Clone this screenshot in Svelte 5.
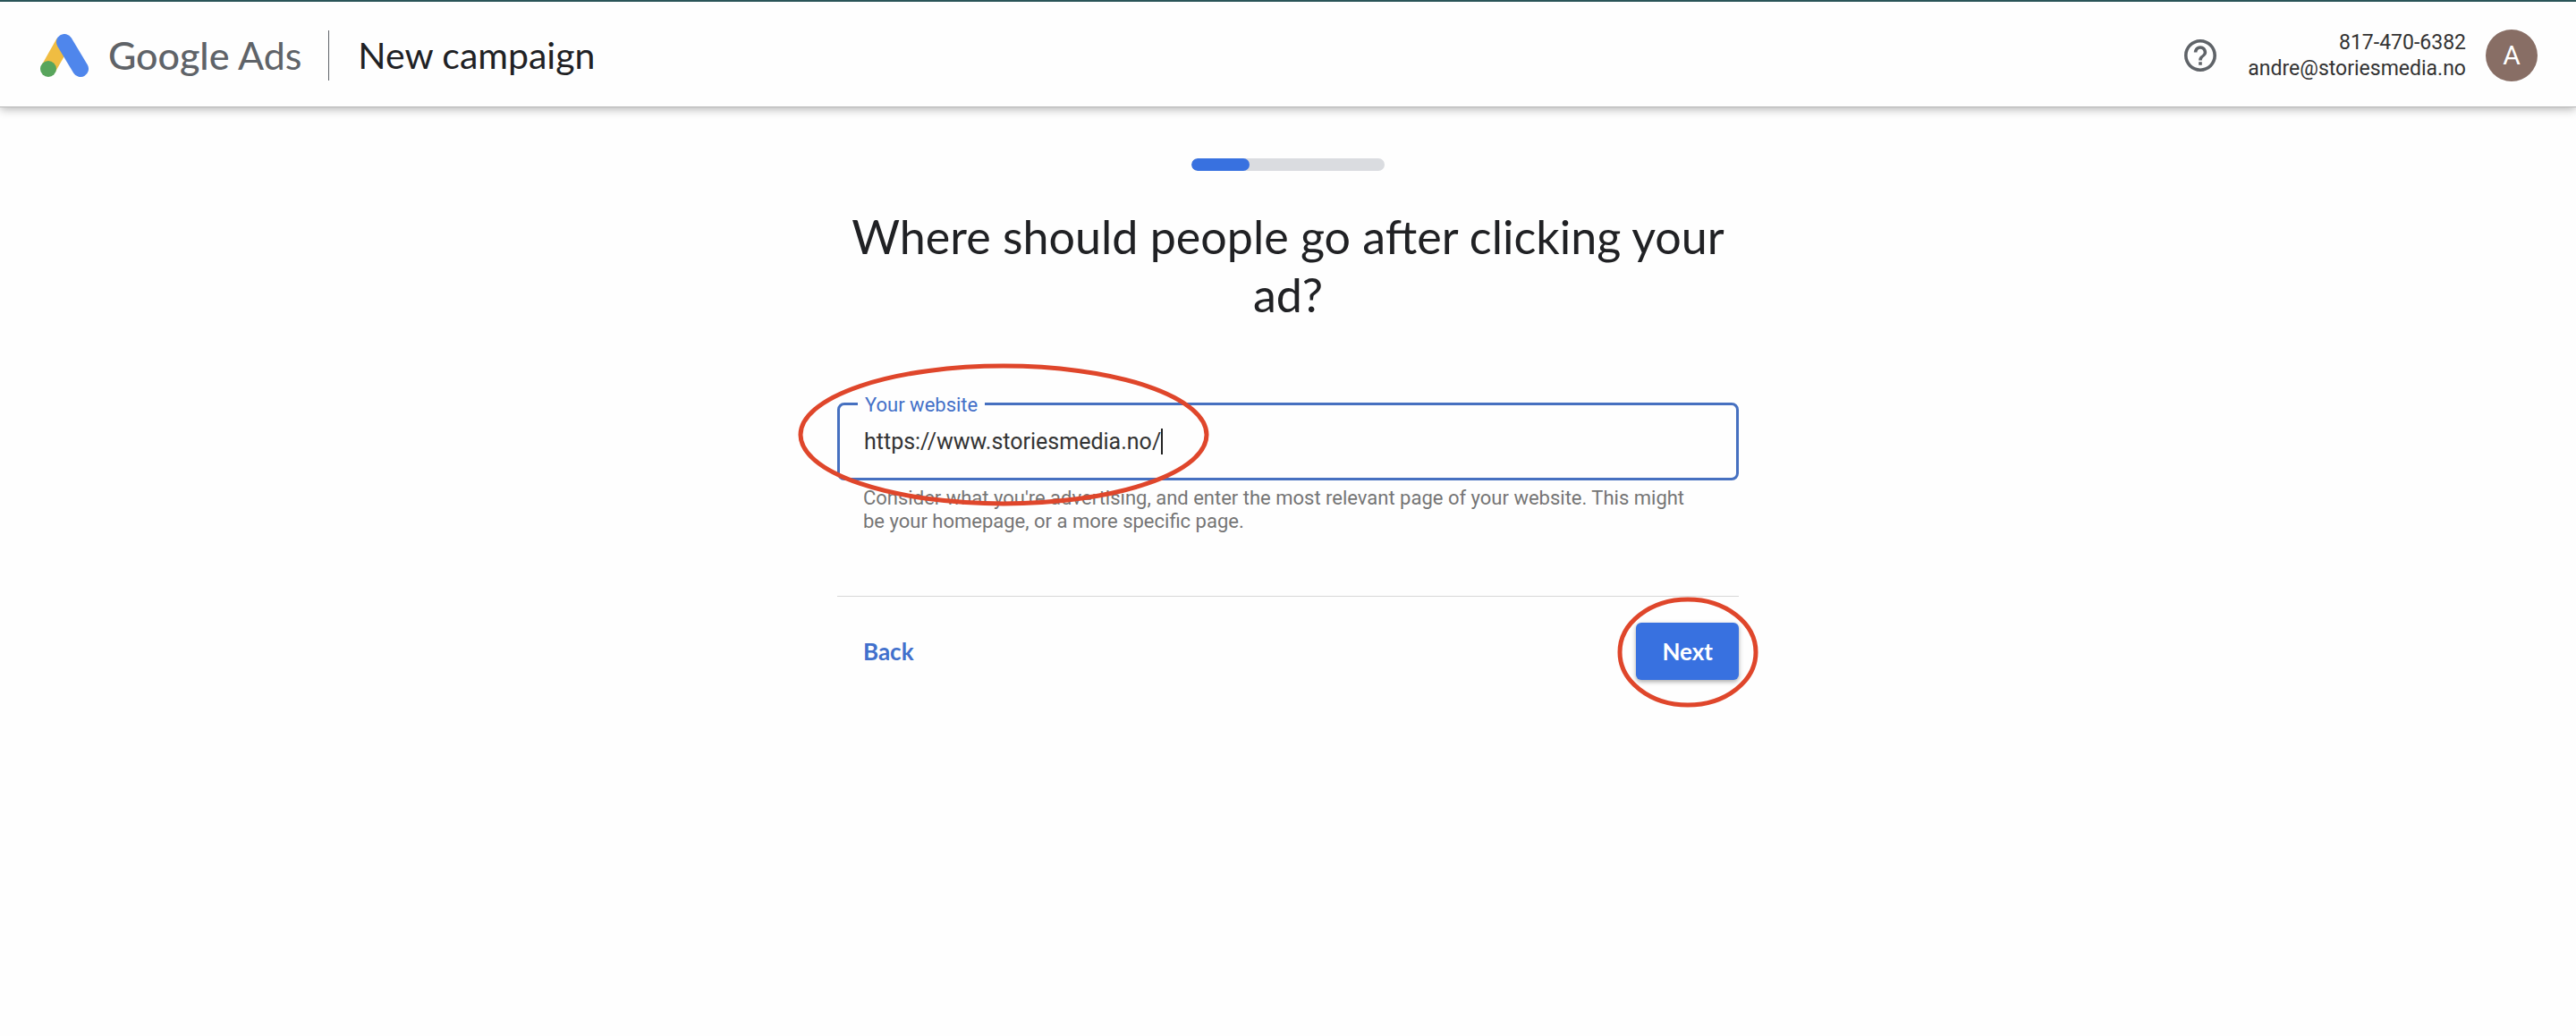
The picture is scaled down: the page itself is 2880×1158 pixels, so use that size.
<script lang="ts">
    let website = $state("https://www.storiesmedia.no/");
    let step = $state(3);
    const totalSteps = 10;

    const account = {
        id: "817-470-6382",
        email: "andre@storiesmedia.no",
        initial: "A",
    };
</script>

<header>
    <a class="brand" href="/" aria-label="Google Ads">
        <svg class="logo" viewBox="0 0 54 48" aria-hidden="true">
            <line x1="26" y1="9" x2="9" y2="39" stroke="#f0bd42" stroke-width="17" />
            <line
                x1="27"
                y1="9"
                x2="45"
                y2="39"
                stroke="#4f86ec"
                stroke-width="18"
                stroke-linecap="round"
            />
            <circle cx="9" cy="39" r="9" fill="#58a55c" />
        </svg>
        <span class="product"><b>Google</b> Ads</span>
    </a>
    <h1>New campaign</h1>

    <button class="help" aria-label="Help">
        <svg viewBox="2 2 20 20" aria-hidden="true">
            <path
                fill="currentColor"
                d="M11 18h2v-2h-2v2zm1-16C6.48 2 2 6.48 2 12s4.48 10 10 10 10-4.48 10-10S17.52 2 12 2zm0 18c-4.41 0-8-3.59-8-8s3.59-8 8-8 8 3.59 8 8-3.59 8-8 8zm0-14c-2.21 0-4 1.79-4 4h2c0-1.1.9-2 2-2s2 .9 2 2c0 2-3 1.75-3 5h2c0-2.25 3-2.5 3-5 0-2.21-1.79-4-4-4z"
            />
        </svg>
    </button>
    <div class="account">
        <span>{account.id}</span>
        <span>{account.email}</span>
    </div>
    <button class="avatar" aria-label="Account">{account.initial}</button>
</header>

<main>
    <div
        class="progress"
        role="progressbar"
        aria-label="Campaign setup"
        aria-valuenow={step}
        aria-valuemin="0"
        aria-valuemax={totalSteps}
    >
        <div class="bar" style:width="{(step / totalSteps) * 100}%"></div>
    </div>

    <h2>Where should people go after clicking your ad?</h2>

    <form onsubmit={(e) => e.preventDefault()}>
        <div class="field">
            <label for="website">Your website</label>
            <div class="value">
                <input id="website" type="text" bind:value={website} aria-describedby="hint" />
                <span class="caret"></span>
            </div>
            <svg class="mark" viewBox="0 0 460 160" aria-hidden="true">
                <ellipse cx="230" cy="80" rx="227" ry="77" />
            </svg>
        </div>
        <p id="hint">
            Consider what you're advertising, and enter the most relevant page of your website. This
            might be your homepage, or a more specific page.
        </p>

        <div class="actions">
            <button type="button" class="back">Back</button>
            <div class="next-wrap">
                <button type="submit" class="next">Next</button>
                <svg class="mark" viewBox="0 0 158 124" aria-hidden="true">
                    <ellipse cx="79" cy="62" rx="76" ry="59" />
                </svg>
            </div>
        </div>
    </form>
</main>

<style>
    :global(body) {
        margin: 0;
        background: #fefefe;
        font-family: Roboto, "Liberation Sans", sans-serif;
        color: #333;
    }

    button {
        padding: 0;
        border: none;
        background: none;
        cursor: pointer;
    }

    header {
        display: flex;
        align-items: center;
        box-sizing: border-box;
        height: 120px;
        padding: 2px 43px 0 45px;
        border-top: 2px solid #2a5558;
        border-bottom: 1px solid #b8b8b8;
        background: #fefefe;
        box-shadow: 0 2px 10px rgba(0, 0, 0, 0.3);
    }

    .brand {
        display: flex;
        align-items: center;
        gap: 22px;
        color: #5f6368;
        text-decoration: none;
    }

    .logo {
        width: 54px;
        height: 48px;
    }

    .product {
        font: 400 43px/56px Lato, sans-serif;
    }

    .product b {
        font-weight: 500;
    }

    h1 {
        margin: 0 auto 0 30px;
        padding-left: 32px;
        border-left: 1px solid #5f6368;
        font: 400 41px/56px Lato, sans-serif;
        color: #202124;
    }

    .help {
        display: flex;
        color: #5f6368;
    }

    .help svg {
        width: 36px;
        height: 36px;
    }

    .account {
        display: flex;
        flex-direction: column;
        margin: 0 22px 0 35px;
        text-align: right;
        font-size: 23px;
        line-height: 29px;
    }

    .avatar {
        width: 58px;
        height: 58px;
        border-radius: 50%;
        background: #886e65;
        color: #fff;
        font: 400 30px/58px Roboto, sans-serif;
    }

    main {
        display: flex;
        flex-direction: column;
        align-items: center;
        max-width: 1008px;
        margin: 0 auto;
        padding: 57px 0 64px;
    }

    .progress {
        width: 216px;
        height: 14px;
        border-radius: 7px;
        background: #dadce0;
        overflow: hidden;
    }

    .bar {
        height: 100%;
        border-radius: 7px;
        background: #3871e0;
    }

    h2 {
        margin: 41px 0 0;
        text-align: center;
        font: 400 52px/65px Lato, sans-serif;
        color: #202124;
    }

    form {
        width: 100%;
        margin-top: 88px;
    }

    .field {
        position: relative;
        box-sizing: border-box;
        height: 87px;
        padding: 0 27px;
        border: 3px solid #4670c0;
        border-radius: 8px;
    }

    .field label {
        position: absolute;
        top: -13px;
        left: 20px;
        padding: 0 8px;
        background: #fefefe;
        color: #4470c8;
        font-size: 22px;
        line-height: 26px;
    }

    .value {
        display: flex;
        align-items: center;
        height: 100%;
    }

    input {
        field-sizing: content;
        padding: 0;
        border: none;
        outline: none;
        background: none;
        color: #333;
        font: 400 25px/32px Roboto, sans-serif;
    }

    .caret {
        width: 2px;
        height: 29px;
        background: #222;
    }

    .mark {
        position: absolute;
        overflow: visible;
        fill: none;
        stroke: #df462b;
        stroke-width: 5px;
        pointer-events: none;
    }

    .field .mark {
        top: -47px;
        left: -47px;
        width: 460px;
        height: 160px;
    }

    #hint {
        margin: 7px 0 0;
        padding: 0 48px 0 29px;
        color: #757575;
        font-size: 22px;
        line-height: 26px;
    }

    .actions {
        display: flex;
        justify-content: space-between;
        align-items: center;
        margin-top: 70px;
        padding-top: 29px;
        border-top: 1px solid #d8d8d8;
    }

    .back,
    .next {
        height: 64px;
        padding: 0 29px;
        border-radius: 6px;
        font: 700 26px/64px Lato, sans-serif;
    }

    .back {
        color: #4170cc;
    }

    .next-wrap {
        position: relative;
    }

    .next {
        background: #3871e0;
        color: #fff;
        box-shadow: 0 2px 5px rgba(0, 0, 0, 0.35);
    }

    .next-wrap .mark {
        top: -29px;
        left: -21px;
        width: 158px;
        height: 124px;
    }
</style>
